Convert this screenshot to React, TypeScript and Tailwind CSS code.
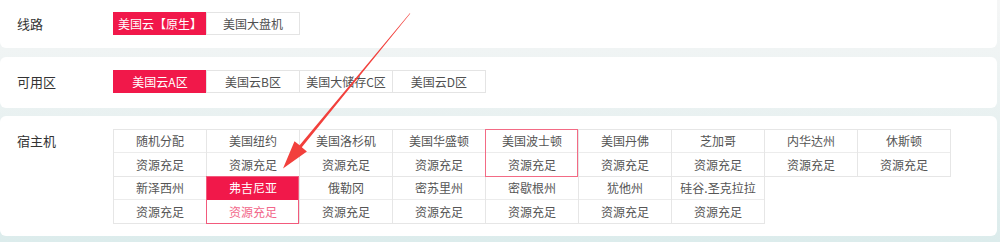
import React from 'react';

const font = { fontFamily: '"Noto Sans CJK SC", "Microsoft YaHei", sans-serif' };

type Host = { name: string; hover?: boolean; active?: boolean };

const hosts: Host[] = [
  { name: '随机分配' },
  { name: '美国纽约' },
  { name: '美国洛杉矶' },
  { name: '美国华盛顿' },
  { name: '美国波士顿', hover: true },
  { name: '美国丹佛' },
  { name: '芝加哥' },
  { name: '内华达州' },
  { name: '休斯顿' },
  { name: '新泽西州' },
  { name: '弗吉尼亚', active: true },
  { name: '俄勒冈' },
  { name: '密苏里州' },
  { name: '密歇根州' },
  { name: '犹他州' },
  { name: '硅谷.圣克拉拉' },
];

function Segmented({ items, active }: { items: string[]; active: number }) {
  return (
    <div className="flex">
      {items.map((item, i) => (
        <div
          key={item}
          className={
            'flex h-[23px] w-[94px] items-center justify-center border text-[12px] ' +
            (i > 0 ? '-ml-px ' : '') +
            (i === active
              ? 'border-[#f1184a] bg-[#f1184a] text-white'
              : 'border-[#e4e4e4] bg-white text-[#505050]')
          }
        >
          {item}
        </div>
      ))}
    </div>
  );
}

function Row({ label, children, className }: { label: string; children: React.ReactNode; className: string }) {
  return (
    <div className={'flex items-start bg-white ' + className}>
      <div className="w-[113px] pl-[17px] text-[13px] leading-[23px] text-[#333]">{label}</div>
      {children}
    </div>
  );
}

function HostCell({ host }: { host: Host }) {
  return (
    <div className="relative flex flex-col border-r border-[#e6e6e6] text-[12px]">
      <div
        className={
          'flex h-[23px] items-center justify-center border-b ' +
          (host.active ? 'border-[#f1184a] bg-[#f1184a] text-white' : 'border-[#ececec] text-[#555]')
        }
      >
        {host.name}
      </div>
      <div
        className={
          'flex h-[24px] items-center justify-center border-b border-[#e6e6e6] ' +
          (host.active ? 'text-[#f2668a]' : 'text-[#555]')
        }
      >
        资源充足
      </div>
      {host.hover && (
        <span className="pointer-events-none absolute -left-px -top-px bottom-0 right-0 border border-[#f36b85]" />
      )}
      {host.active && (
        <span className="pointer-events-none absolute -left-px -top-px bottom-0 right-0 border border-[#f25a7c]" />
      )}
    </div>
  );
}

export default function App() {
  return (
    <div className="relative h-[242px] w-[1000px] overflow-hidden bg-linear-to-b from-[#f5f6f6] to-[#dcecec] pr-[3px]" style={font}>
      <Row label="线路" className="h-[48px] rounded-b-md pt-[12px]">
        <Segmented items={['美国云【原生】', '美国大盘机']} active={0} />
      </Row>

      <Row label="可用区" className="mt-[9px] h-[51px] rounded-md pt-[13px]">
        <Segmented items={['美国云A区', '美国云B区', '美国大储存C区', '美国云D区']} active={0} />
      </Row>

      <Row label="宿主机" className="mt-[8px] h-[120px] rounded-md pt-[13px]">
        <div className="grid w-fit grid-cols-[repeat(9,93px)] border-l border-t border-[#e6e6e6]">
          {hosts.map((h) => (
            <HostCell key={h.name} host={h} />
          ))}
        </div>
      </Row>

      {/* annotation arrow */}
      <svg className="pointer-events-none absolute left-0 top-0" width="1000" height="242" viewBox="0 0 1000 242">
        <polygon
          points="410.3,13.6 409.8,13.2 299.6,145.3 294.5,141.2 283,168.5 306.9,151.4 301.8,147.3"
          fill="#f2403c"
        />
      </svg>
    </div>
  );
}
